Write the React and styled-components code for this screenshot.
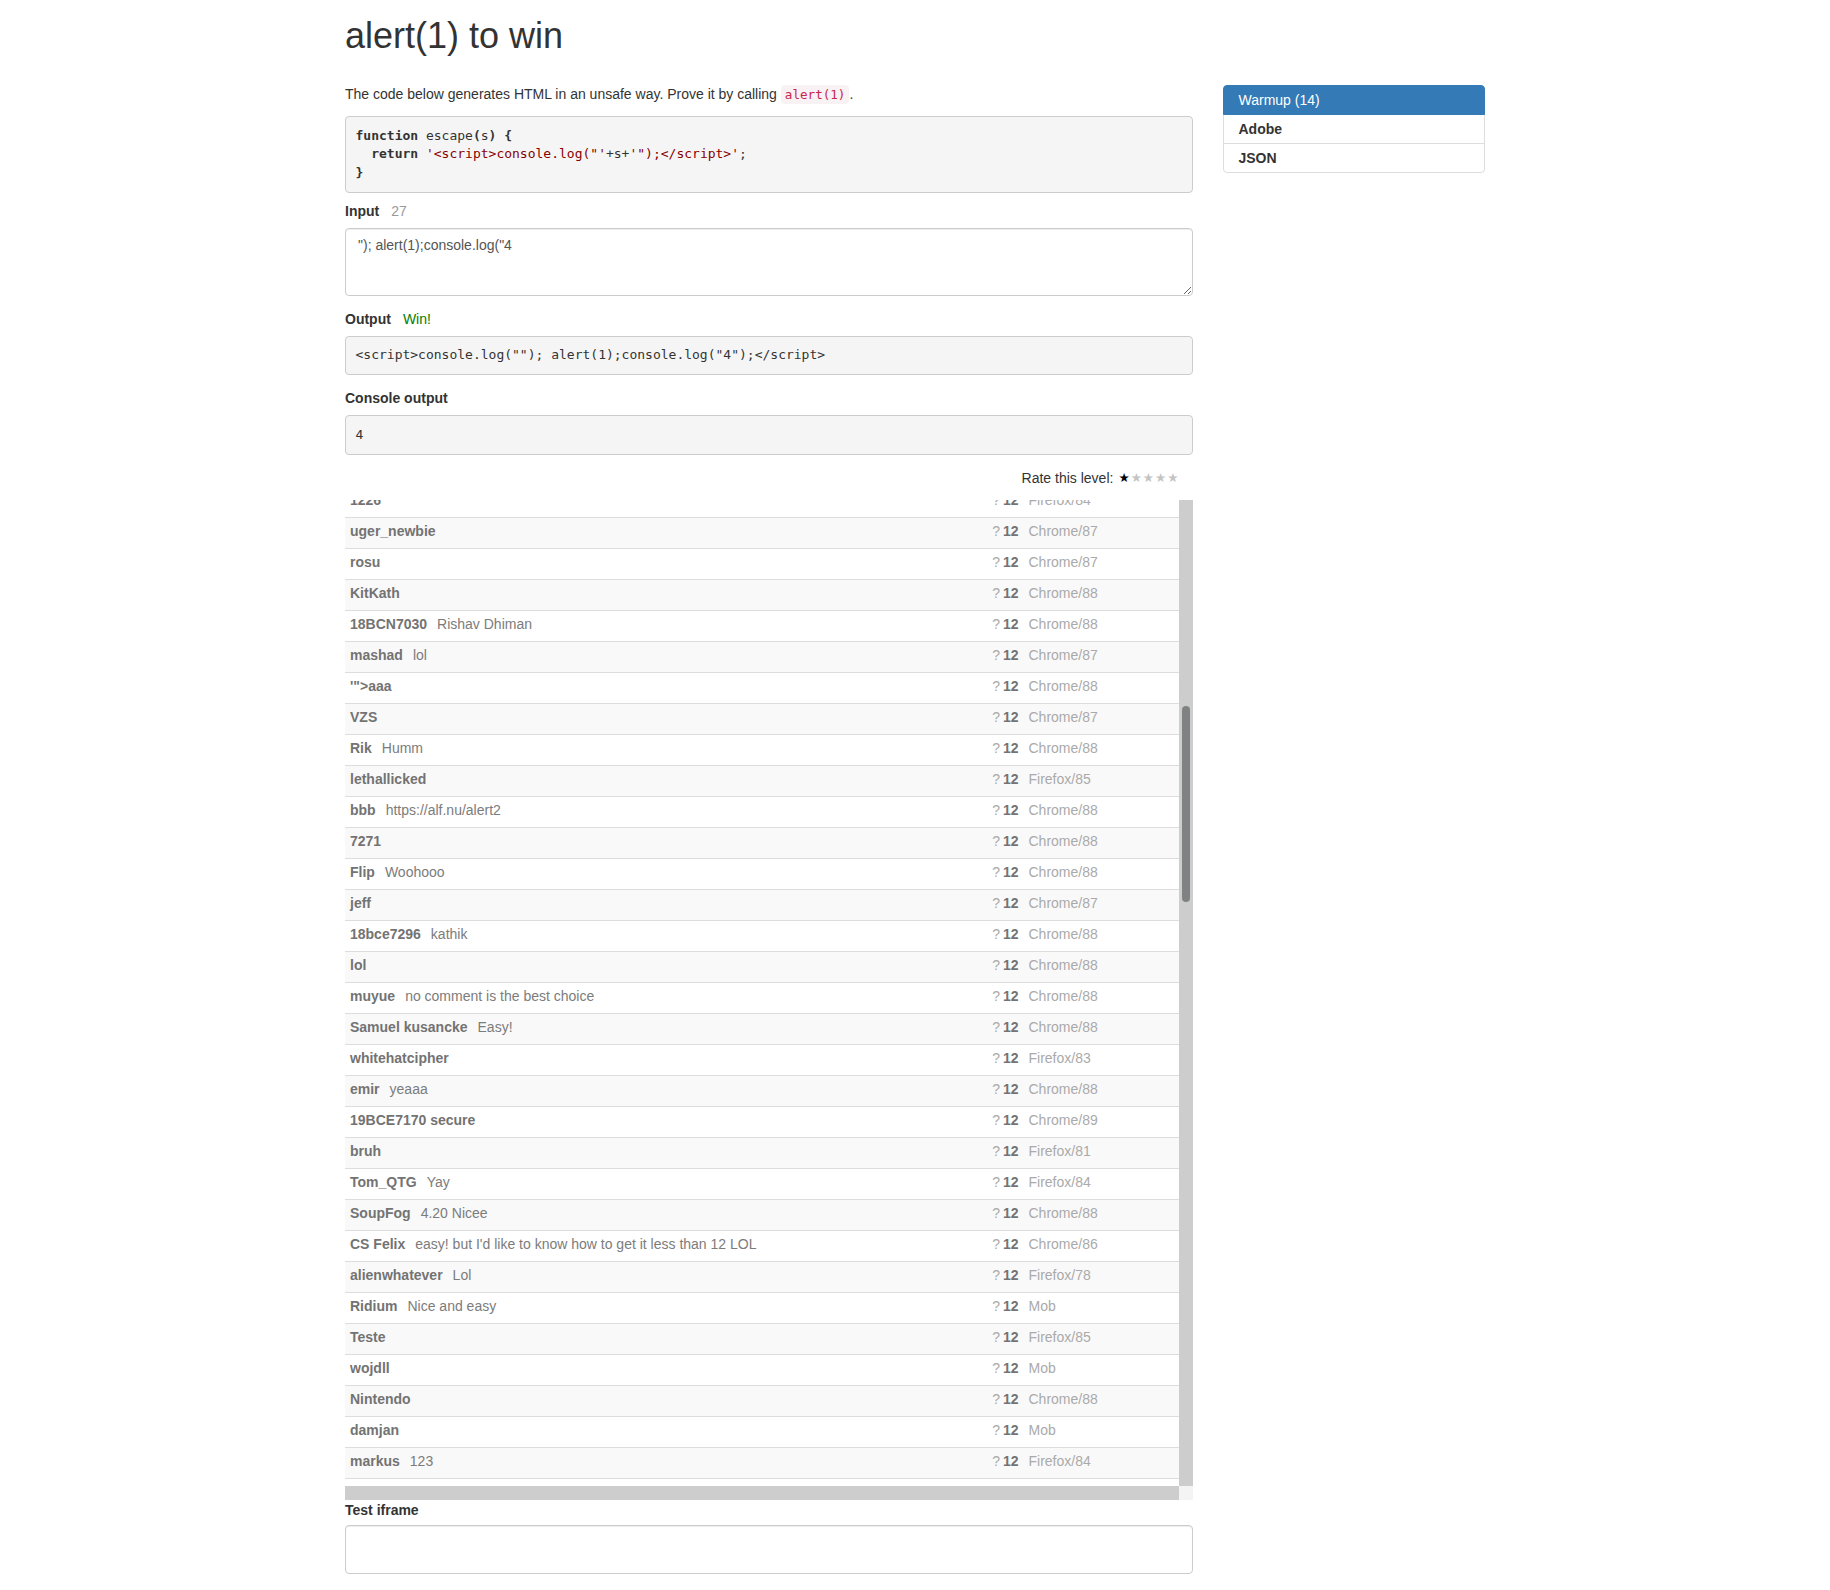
import React, { useLayoutEffect, useRef } from 'react';
import styled, { createGlobalStyle } from 'styled-components';

// Page-wide defaults, bootstrap 3 flavour
const GlobalStyle = createGlobalStyle`
  * {
    box-sizing: border-box;
  }

  body {
    margin: 0;
    font-family: 'Liberation Sans', Helvetica, Arial, sans-serif;
    font-size: 14px;
    line-height: 20px;
    color: #333;
    background: #fff;
  }
`;

const Container = styled.div`
  width: 1170px;
  margin: 0 auto;
  padding: 0 15px;
`;

const Title = styled.h1`
  margin: 16px 0 0;
  font-size: 36px;
  font-weight: 500;
  line-height: 40px;
`;

const Row = styled.div`
  display: grid;
  grid-template-columns: 847.5px 262.5px;
  column-gap: 30px;
  align-items: start;
  margin-top: 28px;
`;

const Main = styled.div`
  display: flex;
  flex-direction: column;
`;

const Intro = styled.p`
  margin: 0 0 11px;
`;

const InlineCode = styled.code`
  font-family: 'DejaVu Sans Mono', monospace;
  font-size: 12.6px;
  color: #c7254e;
  background: #f9f2f4;
  padding: 2px 4px;
  border-radius: 4px;
`;

const Pre = styled.pre`
  margin: 0 0 ${(p) => p.$gap || 13}px;
  padding: 9.5px;
  font-family: 'DejaVu Sans Mono', monospace;
  font-size: 13px;
  line-height: 18.57px;
  color: #333;
  background: #f5f5f5;
  border: 1px solid #ccc;
  border-radius: 4px;
  white-space: pre;
  overflow: hidden;
`;

const Kw = styled.span`
  font-weight: bold;
`;

const Str = styled.span`
  color: #880000;
`;

const Label = styled.div`
  display: flex;
  gap: 12px;
  margin-bottom: 7px;
  font-weight: bold;
`;

const LabelNote = styled.span`
  font-weight: normal;
  color: ${(p) => (p.$win ? '#008000' : '#999')};
`;

const InputArea = styled.textarea`
  display: block;
  width: 100%;
  height: 68px;
  margin: 0 0 13px;
  padding: 6px 12px;
  font-family: 'Liberation Sans', Helvetica, Arial, sans-serif;
  font-size: 14px;
  line-height: 20px;
  color: #555;
  border: 1px solid #ccc;
  border-radius: 4px;
  box-shadow: inset 0 1px 1px rgba(0, 0, 0, 0.075);
  outline: none;
`;

const RateBar = styled.div`
  display: flex;
  justify-content: flex-end;
  align-items: center;
  gap: 5px;
  padding-right: 13px;
  margin-bottom: 12px;
`;

const Stars = styled.span`
  font-family: 'DejaVu Sans', sans-serif;
  font-size: 12.5px;
  letter-spacing: 1px;
`;

const Star = styled.span`
  color: ${(p) => (p.$on ? '#000' : '#c4c4c4')};
`;

// Leaderboard: a scrolled list with its scrollbars drawn beside it
const ROW_H = 31;
const VIEW_H = 986;
const BAR = 14;
const SCROLL_TOP = 1037;

const Board = styled.div`
  display: grid;
  grid-template-columns: 1fr ${BAR}px;
  grid-template-rows: ${VIEW_H}px ${BAR}px;
`;

const Viewport = styled.div`
  overflow: hidden;
`;

const VTrack = styled.div`
  background: #cdcdcd;
  padding: 0 3px;
`;

const Thumb = styled.div`
  width: 8px;
  border-radius: 4px;
  background: #7f8283;
`;

const HTrack = styled.div`
  background: #cdcdcd;
`;

const Corner = styled.div`
  background: #f4f4f4;
`;

const Table = styled.table`
  width: 100%;
  border-collapse: collapse;
  border-spacing: 0;
`;

const Tr = styled.tr`
  background: ${(p) => (p.$odd ? '#f9f9f9' : '#fff')};
`;

const Td = styled.td`
  padding: 3px 5px 7px;
  height: ${ROW_H}px;
  border-top: 1px solid #ddd;
  white-space: nowrap;
  text-align: ${(p) => (p.$right ? 'right' : 'left')};
  width: ${(p) => p.$w || 'auto'};
  color: #aaa;
`;

const Name = styled.span`
  font-weight: bold;
  color: #737373;
`;

const Comment = styled.span`
  margin-left: 10px;
  color: #7c7c7c;
`;

const Score = styled.span`
  margin-left: 3px;
  font-weight: bold;
  color: #737373;
`;

const BoardLabel = styled(Label)`
  margin-bottom: 5px;
`;

const Frame = styled.div`
  height: 49px;
  border: 1px solid #ccc;
  border-radius: 4px;
  box-shadow: inset 0 1px 1px rgba(0, 0, 0, 0.075);
`;

// Sidebar level list
const LevelList = styled.div`
  display: flex;
  flex-direction: column;
  margin-top: 1px;
`;

const LevelItem = styled.div`
  padding: 4px 15px;
  margin-bottom: -1px;
  border: 1px solid ${(p) => (p.$active ? '#337ab7' : '#ddd')};
  background: ${(p) => (p.$active ? '#337ab7' : '#fff')};
  color: ${(p) => (p.$active ? '#fff' : '#333')};
  font-weight: ${(p) => (p.$active ? 'normal' : 'bold')};
  position: relative;
  z-index: ${(p) => (p.$active ? 2 : 1)};

  &:first-child {
    border-radius: 4px 4px 0 0;
  }

  &:last-child {
    border-radius: 0 0 4px 4px;
    margin-bottom: 0;
  }
`;

const visible = [
  ['1226', '', 'Firefox/84'],
  ['uger_newbie', '', 'Chrome/87'],
  ['rosu', '', 'Chrome/87'],
  ['KitKath', '', 'Chrome/88'],
  ['18BCN7030', 'Rishav Dhiman', 'Chrome/88'],
  ['mashad', 'lol', 'Chrome/87'],
  ['\'">aaa', '', 'Chrome/88'],
  ['VZS', '', 'Chrome/87'],
  ['Rik', 'Humm', 'Chrome/88'],
  ['lethallicked', '', 'Firefox/85'],
  ['bbb', 'https://alf.nu/alert2', 'Chrome/88'],
  ['7271', '', 'Chrome/88'],
  ['Flip', 'Woohooo', 'Chrome/88'],
  ['jeff', '', 'Chrome/87'],
  ['18bce7296', 'kathik', 'Chrome/88'],
  ['lol', '', 'Chrome/88'],
  ['muyue', 'no comment is the best choice', 'Chrome/88'],
  ['Samuel kusancke', 'Easy!', 'Chrome/88'],
  ['whitehatcipher', '', 'Firefox/83'],
  ['emir', 'yeaaa', 'Chrome/88'],
  ['19BCE7170 secure', '', 'Chrome/89'],
  ['bruh', '', 'Firefox/81'],
  ['Tom_QTG', 'Yay', 'Firefox/84'],
  ['SoupFog', '4.20 Nicee', 'Chrome/88'],
  ['CS Felix', "easy! but I'd like to know how to get it less than 12 LOL", 'Chrome/86'],
  ['alienwhatever', 'Lol', 'Firefox/78'],
  ['Ridium', 'Nice and easy', 'Mob'],
  ['Teste', '', 'Firefox/85'],
  ['wojdll', '', 'Mob'],
  ['Nintendo', '', 'Chrome/88'],
  ['damjan', '', 'Mob'],
  ['markus', '123', 'Firefox/84'],
  ['tom', '', 'Chrome/88'],
];

const fillerNames = ['anon', 'hax0r', 'test', 'xss', 'kevin', 'pwn', 'lulz', 'foo', 'bar', 'qwerty', 'n00b', 'zed'];
const browsers = ['Chrome/88', 'Chrome/87', 'Firefox/85', 'Mob'];
const filler = (from, count) =>
  Array.from({ length: count }, (_, i) => [
    `${fillerNames[(from + i) % fillerNames.length]}${from + i}`,
    '',
    browsers[(from + i) % browsers.length],
  ]);

const rows = [...filler(0, 33), ...visible, ...filler(100, 94)];

const Leaderboard = () => {
  const ref = useRef(null);
  useLayoutEffect(() => {
    if (ref.current) ref.current.scrollTop = SCROLL_TOP;
  }, []);

  const contentH = rows.length * ROW_H;
  const thumbH = Math.round((VIEW_H * VIEW_H) / contentH);
  const thumbTop = Math.round((SCROLL_TOP / (contentH - VIEW_H)) * (VIEW_H - thumbH));

  return (
    <Board>
      <Viewport ref={ref}>
        <Table>
          <tbody>
            {rows.map(([name, comment, browser], i) => (
              <Tr key={i} $odd={i % 2 === 0}>
                <Td>
                  <Name>{name}</Name>
                  {comment && <Comment>{comment}</Comment>}
                </Td>
                <Td $right>
                  ?<Score>12</Score>
                </Td>
                <Td $w="155px">{browser}</Td>
              </Tr>
            ))}
          </tbody>
        </Table>
      </Viewport>
      <VTrack>
        <Thumb style={{ height: thumbH, marginTop: thumbTop }} />
      </VTrack>
      <HTrack />
      <Corner />
    </Board>
  );
};

const App = () => (
  <>
    <GlobalStyle />
    <Container>
      <Title>alert(1) to win</Title>
      <Row>
        <Main>
          <Intro>
            The code below generates HTML in an unsafe way. Prove it by calling <InlineCode>alert(1)</InlineCode>.
          </Intro>
          <Pre $gap={8}>
            <Kw>function</Kw> escape<Kw>(</Kw>s<Kw>) {'{'}</Kw>
            {'\n  '}
            <Kw>return</Kw> <Str>{'\'<script>console.log("\''}</Str>+s+<Str>{'\'");</script>\''}</Str>;
            {'\n'}
            <Kw>{'}'}</Kw>
          </Pre>

          <Label>
            Input <LabelNote>27</LabelNote>
          </Label>
          <InputArea defaultValue={'"); alert(1);console.log("4'} spellCheck={false} />

          <Label>
            Output <LabelNote $win>Win!</LabelNote>
          </Label>
          <Pre>{'<script>console.log(""); alert(1);console.log("4");</script>'}</Pre>

          <Label>Console output</Label>
          <Pre>4</Pre>

          <RateBar>
            Rate this level:
            <Stars>
              <Star $on>★</Star>
              <Star>★</Star>
              <Star>★</Star>
              <Star>★</Star>
              <Star>★</Star>
            </Stars>
          </RateBar>

          <Leaderboard />

          <BoardLabel>Test iframe</BoardLabel>
          <Frame />
        </Main>

        <LevelList>
          <LevelItem $active>Warmup (14)</LevelItem>
          <LevelItem>Adobe</LevelItem>
          <LevelItem>JSON</LevelItem>
        </LevelList>
      </Row>
    </Container>
  </>
);

export default App;
